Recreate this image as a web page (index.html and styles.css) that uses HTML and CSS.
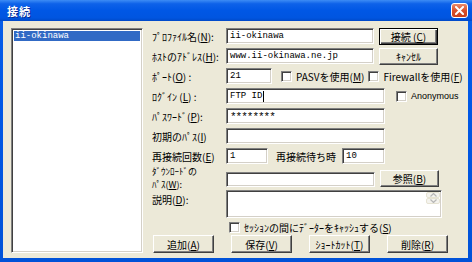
FILE: index.html
```html
<!DOCTYPE html>
<html>
<head>
<meta charset="utf-8">
<link rel="stylesheet" href="styles.css">
</head>
<body>
<div class="window">
  <div class="titlebar">
    <span class="title">接続</span>
    <span class="close"><svg width="9" height="9" viewBox="0 0 9 9"><path d="M1 1 L8 8 M8 1 L1 8" stroke="#fff" stroke-width="2" stroke-linecap="square"/></svg></span>
  </div>
  <div class="body">
    <div class="listbox"><div class="item sel">ii-okinawa</div></div>
    <div class="form">
      <div class="row">
        <span class="lbl">ﾌﾟﾛﾌｧｲﾙ名(<u>N</u>):</span>
        <span class="field w148">ii-okinawa</span>
        <span class="btn default side">接続 (<u>C</u>)</span>
      </div>
      <div class="row">
        <span class="lbl">ﾎｽﾄのｱﾄﾞﾚｽ(<u>H</u>):</span>
        <span class="field w148">www.ii-okinawa.ne.jp</span>
        <span class="btn side">ｷｬﾝｾﾙ</span>
      </div>
      <div class="row">
        <span class="lbl">ﾎﾟｰﾄ(<u>O</u>) :</span>
        <span class="field w46">21</span>
        <span class="chk c1"><span class="box"></span>PASVを使用(<u>M</u>)</span>
        <span class="chk c2"><span class="box"></span>Firewallを使用(<u>F</u>)</span>
      </div>
      <div class="row">
        <span class="lbl">ﾛｸﾞｲﾝ (<u>L</u>) :</span>
        <span class="field w159">FTP ID<span class="caret"></span></span>
        <span class="chk c3"><span class="box"></span><span class="anon">Anonymous</span></span>
      </div>
      <div class="row">
        <span class="lbl">ﾊﾟｽﾜｰﾄﾞ(<u>P</u>):</span>
        <span class="field w159 pw">********</span>
      </div>
      <div class="row">
        <span class="lbl">初期のﾊﾟｽ(<u>I</u>)</span>
        <span class="field w159"></span>
      </div>
      <div class="row">
        <span class="lbl">再接続回数(<u>E</u>)</span>
        <span class="field w42">1</span>
        <span class="lbl2">再接続待ち時</span>
        <span class="field w43">10</span>
      </div>
      <div class="row r2">
        <span class="lbl two"><span class="ln">ﾀﾞｳﾝﾛｰﾄﾞの</span><span class="ln">ﾊﾟｽ(<u>W</u>):</span></span>
        <span class="field w149"></span>
        <span class="btn side">参照(<u>B</u>)</span>
      </div>
      <div class="row r3">
        <span class="lbl top">説明(<u>D</u>):</span>
        <span class="field area">
          <span class="sb">
            <span class="arrow"><svg width="7" height="4" viewBox="0 0 7 4"><path d="M0.5 3.5 L3.5 0.5 L6.5 3.5" fill="none" stroke="#b7b7b7" stroke-width="1.2"/></svg></span>
            <span class="arrow"><svg width="7" height="4" viewBox="0 0 7 4"><path d="M0.5 0.5 L3.5 3.5 L6.5 0.5" fill="none" stroke="#b7b7b7" stroke-width="1.2"/></svg></span>
          </span>
        </span>
      </div>
      <div class="row r4">
        <span class="chk c4"><span class="box"></span>ｾｯｼｮﾝの間にﾃﾞｰﾀｰをｷｬｯｼｭする(<u>S</u>)</span>
      </div>
      <div class="row r5">
        <span class="btn bottom">追加(<u>A</u>)</span>
        <span class="btn bottom">保存(<u>V</u>)</span>
        <span class="btn bottom">ｼｮｰﾄｶｯﾄ(<u>T</u>)</span>
        <span class="btn bottom">削除(<u>R</u>)</span>
      </div>
    </div>
  </div>
</div>
</body>
</html>
```

FILE: styles.css
```css
html, body {
  margin: 0;
  padding: 0;
  width: 472px;
  height: 262px;
  overflow: hidden;
}
.window {
  width: 472px;
  height: 262px;
  background: linear-gradient(180deg, #0a5fe8 0%, #0058e6 40%, #0052d8 100%);
  display: flex;
  flex-direction: column;
  font-family: "Noto Sans CJK JP", "Liberation Sans", sans-serif;
  font-size: 10px;
  color: #000;
}
.titlebar {
  height: 21px;
  flex: none;
  display: flex;
  align-items: center;
  justify-content: space-between;
  padding: 0 4px 0 7px;
  background: linear-gradient(180deg, #3d8cf5 0%, #0e62e9 18%, #0057e5 50%, #0055e0 85%, #0049c8 100%);
}
.title {
  color: #fff;
  font-weight: bold;
  font-size: 11px;
  letter-spacing: 1px;
  text-shadow: 1px 1px 0 #0a2b8f;
}
.close {
  width: 17px;
  height: 15px;
  box-sizing: border-box;
  border: 1px solid #fff;
  border-radius: 3px;
  background: linear-gradient(180deg, #e98a6a 0%, #d9512c 50%, #c9401c 100%);
  display: flex;
  align-items: center;
  justify-content: center;
}
.body {
  flex: 1;
  margin: 0 4px 4px 3px;
  background: #ece9d8;
  display: flex;
  align-items: flex-start;
  padding: 7px 0 0 8px;
}
.listbox {
  width: 132px;
  height: 225px;
  box-sizing: border-box;
  background: #fff;
  border-style: solid;
  border-width: 1px;
  border-color: #808080 #fff #fff #808080;
  box-shadow: inset 1px 1px 0 #404040, inset -1px -1px 0 #d4d0c8;
  padding: 2px;
}
.item {
  height: 10px;
  line-height: 10px;
  padding-left: 1px;
  font-family: "Liberation Mono", "DejaVu Sans Mono", monospace;
  font-size: 9px;
}
.item.sel {
  background: #316ac5;
  color: #fff;
}
.form {
  margin-left: 9px;
  display: flex;
  flex-direction: column;
  gap: 4px;
}
.row {
  display: flex;
  align-items: center;
  height: 16px;
  flex: none;
}
.lbl {
  width: 74px;
  flex: none;
  white-space: nowrap;
}
.lbl.two {
  display: flex;
  flex-direction: column;
}
.ln {
  display: block;
  font-size: 9px;
  line-height: 13px;
  height: 13px;
}
.lbl.top {
  align-self: flex-start;
  padding-top: 2px;
}
.lbl2 {
  margin-left: 8px;
  width: 66px;
  flex: none;
}
u {
  text-decoration: underline;
}
.field {
  height: 16px;
  box-sizing: border-box;
  background: #fff;
  border-style: solid;
  border-width: 1px;
  border-color: #808080 #fff #fff #808080;
  box-shadow: inset 1px 1px 0 #404040, inset -1px -1px 0 #d4d0c8;
  padding: 2px 0 0 3px;
  font-family: "Liberation Mono", "DejaVu Sans Mono", monospace;
  font-size: 9px;
  line-height: 11px;
  white-space: nowrap;
  display: flex;
  align-items: flex-start;
  flex: none;
}
.pw {
  font-size: 11px;
  letter-spacing: -1px;
  line-height: 12px;
}
.caret {
  width: 1px;
  height: 11px;
  background: #000;
  margin-left: 1px;
}
.w148 { width: 148px; }
.w149 { width: 149px; }
.w46 { width: 46px; }
.w159 { width: 159px; }
.w42 { width: 42px; }
.w43 { width: 43px; }
.btn {
  height: 17px;
  box-sizing: border-box;
  background: #ece9d8;
  border-style: solid;
  border-width: 1px;
  border-color: #fff #404040 #404040 #fff;
  box-shadow: inset -1px -1px 0 #808080;
  display: flex;
  align-items: center;
  justify-content: center;
  flex: none;
  white-space: nowrap;
}
.btn.side {
  width: 59px;
  margin-left: 5px;
}
.btn.default {
  border: 1px solid #000;
  box-shadow: inset 1px 1px 0 #fff, inset -1px -1px 0 #404040, inset -2px -2px 0 #808080;
}
.chk {
  display: flex;
  align-items: center;
  white-space: nowrap;
  flex: none;
}
.box {
  width: 11px;
  height: 11px;
  box-sizing: border-box;
  background: #fff;
  border-style: solid;
  border-width: 1px;
  border-color: #808080 #fff #fff #808080;
  box-shadow: inset 1px 1px 0 #404040, inset -1px -1px 0 #d4d0c8;
  margin-right: 4px;
  flex: none;
}
.c1 { margin-left: 9px; }
.c2 { margin-left: 4px; }
.c3 { margin-left: 11px; }
.anon {
  font-family: "Liberation Sans", sans-serif;
  font-size: 9px;
}
.c4 { margin-left: 77px; }
.r2 {
  height: 22px;
  margin-top: -1px;
}
.r2 .field { height: 15px; margin-top: 2px; }
.r3 {
  height: 28px;
  align-items: stretch;
  margin-top: -3px;
}
.field.area {
  width: 216px;
  height: 28px;
  padding: 1px;
  justify-content: flex-end;
}
.sb {
  width: 14px;
  display: flex;
  flex-direction: column;
}
.arrow {
  flex: 1;
  box-sizing: border-box;
  border: 1px solid #e6e3d3;
  border-radius: 2px;
  background: #f4f3ee;
  display: flex;
  align-items: center;
  justify-content: center;
}
.r4 {
  height: 12px;
  margin-top: -1px;
}
.r5 {
  height: 18px;
  margin-top: -2px;
  margin-left: 1px;
  gap: 17px;
}
.btn.bottom {
  width: 61px;
  height: 18px;
}
```
